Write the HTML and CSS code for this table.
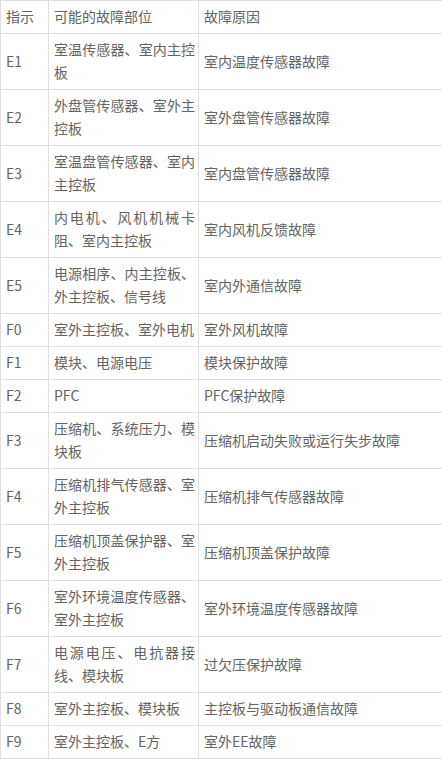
FILE: index.html
```html
<!DOCTYPE html>
<html lang="zh-CN">
<head>
<meta charset="utf-8">
<title>故障代码</title>
<link rel="stylesheet" href="styles.css">
</head>
<body>
<table class="codes">
  <colgroup>
    <col class="c-code">
    <col class="c-part">
    <col class="c-cause">
  </colgroup>
  <tbody>
    <tr><td>指示</td><td>可能的故障部位</td><td>故障原因</td></tr>
    <tr><td>E1</td><td>室温传感器、室内主控板</td><td>室内温度传感器故障</td></tr>
    <tr><td>E2</td><td>外盘管传感器、室外主控板</td><td>室外盘管传感器故障</td></tr>
    <tr><td>E3</td><td>室温盘管传感器、室内主控板</td><td>室内盘管传感器故障</td></tr>
    <tr><td>E4</td><td>内电机、风机机械卡阻、室内主控板</td><td>室内风机反馈故障</td></tr>
    <tr><td>E5</td><td>电源相序、内主控板、外主控板、信号线</td><td>室内外通信故障</td></tr>
    <tr><td>F0</td><td>室外主控板、室外电机</td><td>室外风机故障</td></tr>
    <tr><td>F1</td><td>模块、电源电压</td><td>模块保护故障</td></tr>
    <tr><td>F2</td><td>PFC</td><td>PFC保护故障</td></tr>
    <tr><td>F3</td><td>压缩机、系统压力、模块板</td><td>压缩机启动失败或运行失步故障</td></tr>
    <tr><td>F4</td><td>压缩机排气传感器、室外主控板</td><td>压缩机排气传感器故障</td></tr>
    <tr><td>F5</td><td>压缩机顶盖保护器、室外主控板</td><td>压缩机顶盖保护故障</td></tr>
    <tr><td>F6</td><td>室外环境温度传感器、室外主控板</td><td>室外环境温度传感器故障</td></tr>
    <tr><td>F7</td><td>电源电压、电抗器接线、模块板</td><td>过欠压保护故障</td></tr>
    <tr><td>F8</td><td>室外主控板、模块板</td><td>主控板与驱动板通信故障</td></tr>
    <tr><td>F9</td><td>室外主控板、E方</td><td>室外EE故障</td></tr>
  </tbody>
</table>
</body>
</html>
```
FILE: styles.css
```css
html, body {
  margin: 0;
  padding: 0;
  background: #ffffff;
}

.codes {
  border-collapse: collapse;
  table-layout: fixed;
  width: 442px;
  font-family: "Noto Sans CJK SC", "Noto Sans", sans-serif;
  font-size: 14px;
  line-height: 23px;
  color: #646464;
}

.c-code { width: 48px; }
.c-part { width: 150px; }
.c-cause { width: 244px; }

.codes td {
  border: 1px solid #e0e0e0;
  padding: 4px 3px 5px 5px;
  vertical-align: middle;
  text-align: justify;
  word-break: normal;
  line-break: strict;
}
```
